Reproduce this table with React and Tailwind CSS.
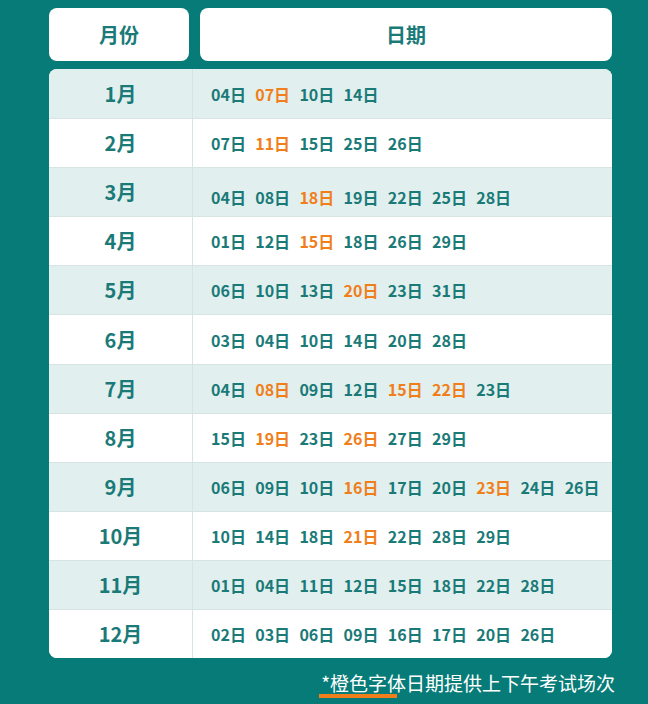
import React from "react";

// o: orange dates (afternoon + morning sessions)
const rows = [
  { m: "1月", d: ["04", "07", "10", "14"], o: ["07"] },
  { m: "2月", d: ["07", "11", "15", "25", "26"], o: ["11"] },
  { m: "3月", d: ["04", "08", "18", "19", "22", "25", "28"], o: ["18"], low: true },
  { m: "4月", d: ["01", "12", "15", "18", "26", "29"], o: ["15"] },
  { m: "5月", d: ["06", "10", "13", "20", "23", "31"], o: ["20"] },
  { m: "6月", d: ["03", "04", "10", "14", "20", "28"], o: [] },
  { m: "7月", d: ["04", "08", "09", "12", "15", "22", "23"], o: ["08", "15", "22"] },
  { m: "8月", d: ["15", "19", "23", "26", "27", "29"], o: ["19", "26"] },
  { m: "9月", d: ["06", "09", "10", "16", "17", "20", "23", "24", "26"], o: ["16", "23"] },
  { m: "10月", d: ["10", "14", "18", "21", "22", "28", "29"], o: ["21"] },
  { m: "11月", d: ["01", "04", "11", "12", "15", "18", "22", "28"], o: [] },
  { m: "12月", d: ["02", "03", "06", "09", "16", "17", "20", "26"], o: [] },
];

const font = { fontFamily: '"Noto Sans CJK SC", "Noto Sans", sans-serif' };

export default function App() {
  return (
    <div className="w-[648px] h-[704px] bg-[#077b78] pt-[8px] pl-[49px] overflow-hidden" style={font}>
      <div className="flex gap-[11px] w-[563px]">
        <div className="w-[140px] h-[53px] bg-white rounded-[8px] flex items-center justify-center text-[20px] font-bold text-[#1a7a78]">
          月份
        </div>
        <div className="flex-1 h-[53px] bg-white rounded-[8px] flex items-center justify-center text-[20px] font-bold text-[#1a7a78]">
          日期
        </div>
      </div>

      <div className="mt-[8px] w-[563px] bg-white rounded-[8px] overflow-hidden">
        {rows.map((r, i) => (
          <div
            key={r.m}
            className={`flex h-[49.1px] ${i % 2 === 0 ? "bg-[#e1efef]" : "bg-white"} ${i > 0 ? "border-t border-[#d6e4e4]" : ""}`}
          >
            <div className="w-[144px] border-r border-[#d6e4e4] flex items-center justify-center text-[20px] font-bold text-[#1a7a78]">
              {r.m}
            </div>
            <div className={`flex-1 flex items-center pl-[18px] gap-x-[9.3px] text-[16px] font-bold ${r.low ? "pt-[10px]" : ""}`}>
              {r.d.map((d) => (
                <span key={d} className={r.o.includes(d) ? "text-[#f07f1b]" : "text-[#1a7a78]"}>
                  {d}日
                </span>
              ))}
            </div>
          </div>
        ))}
      </div>

      <div className="w-[566px] flex justify-end mt-[13px]">
        <div className="relative text-[19px] text-white leading-[24px]">
          <span className="absolute left-[-2px] bottom-[-3px] w-[78px] h-[4px] bg-[#f07f1b]" />
          <span className="relative">*橙色字体日期提供上下午考试场次</span>
        </div>
      </div>
    </div>
  );
}
